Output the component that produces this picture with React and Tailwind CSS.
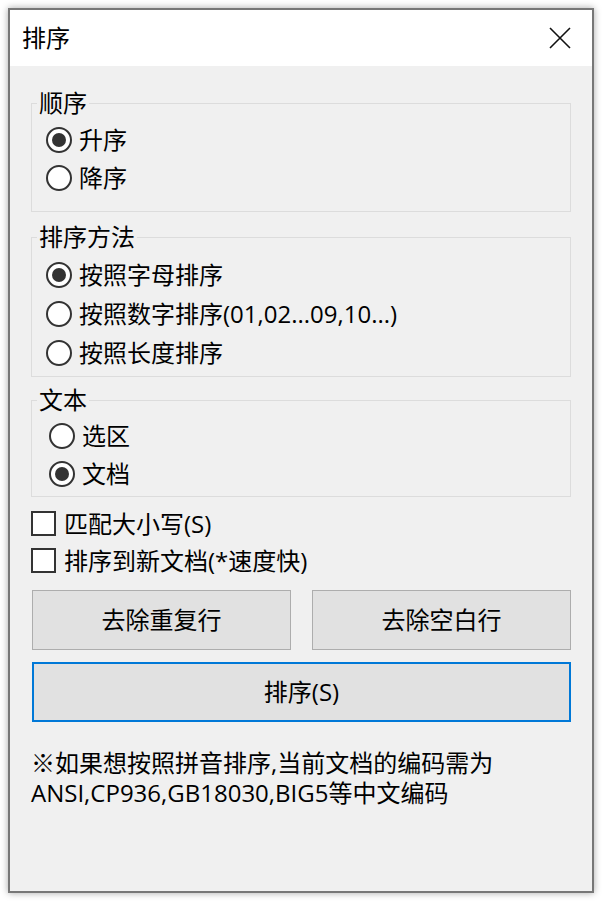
const font = "font-['Open_Sans','Noto_Sans_CJK_SC',sans-serif]";

const Radio = ({ label, checked }) => {
  return (
    <div className="flex h-full items-center gap-[7px]">
      <span className="flex h-[26px] w-[26px] shrink-0 items-center justify-center rounded-full border-2 border-[#333] bg-white">
        {checked && <span className="h-[14px] w-[14px] rounded-full bg-[#333]" />}
      </span>
      <span className="text-[24px] leading-[30px] text-black">{label}</span>
    </div>
  );
};

const Checkbox = ({ label }) => {
  return (
    <div className="flex h-[37px] items-center gap-[8px]">
      <span className="h-[25px] w-[25px] shrink-0 border-2 border-[#333] bg-white" />
      <span className="text-[24px] leading-[30px] text-black">{label}</span>
    </div>
  );
};

const Group = ({ title, items, className, rowClass, indent }) => {
  return (
    <fieldset className={`border border-[#dcdcdc] ${className}`}>
      <legend className="ml-[5px] bg-[#f0f0f0] px-[2px] text-[24px] leading-[30px] text-black">
        {title}
      </legend>
      {items.map(item => (
        <div key={item.label} className={`${rowClass} ${indent}`}>
          <Radio label={item.label} checked={item.checked} />
        </div>
      ))}
    </fieldset>
  );
};

export default function App() {
  return (
    <div className={`min-h-[901px] w-[602px] bg-white p-[8px] ${font}`}>
      <div className="flex h-[885px] w-[586px] flex-col border-2 border-[#777] bg-[#f0f0f0] shadow-[0_0_7px_rgba(0,0,0,0.35)]">
        {/* title bar */}
        <div className="flex h-[56px] shrink-0 items-center justify-between bg-white pl-[12px] pr-[18px]">
          <span className="text-[24px] leading-[30px] text-black">排序</span>
          <svg width="24" height="24" viewBox="0 0 24 24" className="mr-[2px]">
            <path d="M2 2 L22 22 M22 2 L2 22" stroke="#111" strokeWidth="1.6" fill="none" />
          </svg>
        </div>

        <div className="flex flex-col px-[21px]">
          <Group
            title="顺序"
            className="mt-[22px] pt-[3px] pb-[14px]"
            rowClass="h-[38px]"
            indent="pl-[14px]"
            items={[
              { label: '升序', checked: true },
              { label: '降序', checked: false },
            ]}
          />
          <Group
            title="排序方法"
            className="mt-[10px] pt-[3px] pb-[4px]"
            rowClass="h-[39px]"
            indent="pl-[14px]"
            items={[
              { label: '按照字母排序', checked: true },
              { label: '按照数字排序(01,02...09,10...)', checked: false },
              { label: '按照长度排序', checked: false },
            ]}
          />
          <Group
            title="文本"
            className="mt-[8px] pt-[2px] pb-[3px]"
            rowClass="h-[38px]"
            indent="pl-[17px]"
            items={[
              { label: '选区', checked: false },
              { label: '文档', checked: true },
            ]}
          />

          <div className="mt-[8px] flex flex-col">
            <Checkbox label="匹配大小写(S)" />
            <Checkbox label="排序到新文档(*速度快)" />
          </div>

          <div className="mt-[11px] grid grid-cols-2 gap-[21px] pl-[1px]">
            <button className="h-[60px] border border-[#adadad] bg-[#e1e1e1] text-[24px] leading-[30px] text-black">
              去除重复行
            </button>
            <button className="h-[60px] border border-[#adadad] bg-[#e1e1e1] text-[24px] leading-[30px] text-black">
              去除空白行
            </button>
          </div>
          <button className="mt-[12px] ml-[1px] h-[60px] border-2 border-[#0078d7] bg-[#e1e1e1] text-[24px] leading-[30px] text-black">
            排序(S)
          </button>

          <p className="mt-[26px] text-[24px] leading-[30px] text-black">
            ※如果想按照拼音排序,当前文档的编码需为
            <br />
            ANSI,CP936,GB18030,BIG5等中文编码
          </p>
        </div>
      </div>
    </div>
  );
}
